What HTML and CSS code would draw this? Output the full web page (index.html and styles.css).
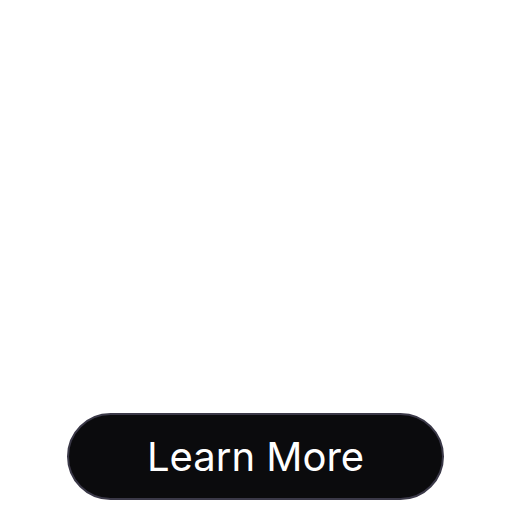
FILE: index.html
```html
<!DOCTYPE html>
<html>
<head>
<meta charset="utf-8">
<link rel="stylesheet" href="styles.css">
</head>
<body>
<main class="page">
  <button class="cta">Learn More</button>
</main>
</body>
</html>
```
FILE: styles.css
```css
html, body { margin: 0; padding: 0; background: #ffffff; }
.page {
  width: 512px;
  height: 512px;
  display: flex;
  flex-direction: column;
  justify-content: flex-end;
  align-items: center;
  padding-bottom: 12px;
  box-sizing: border-box;
}
.cta {
  width: 377px;
  height: 87px;
  margin-left: -1px;
  box-sizing: border-box;
  background: #0b0b0d;
  border: 2px solid #3b3948;
  border-radius: 44px;
  color: #ffffff;
  font-family: Inter, "Noto Sans", sans-serif;
  font-size: 40px;
  font-weight: 400;
  letter-spacing: 0;
  padding: 0;
}
```
